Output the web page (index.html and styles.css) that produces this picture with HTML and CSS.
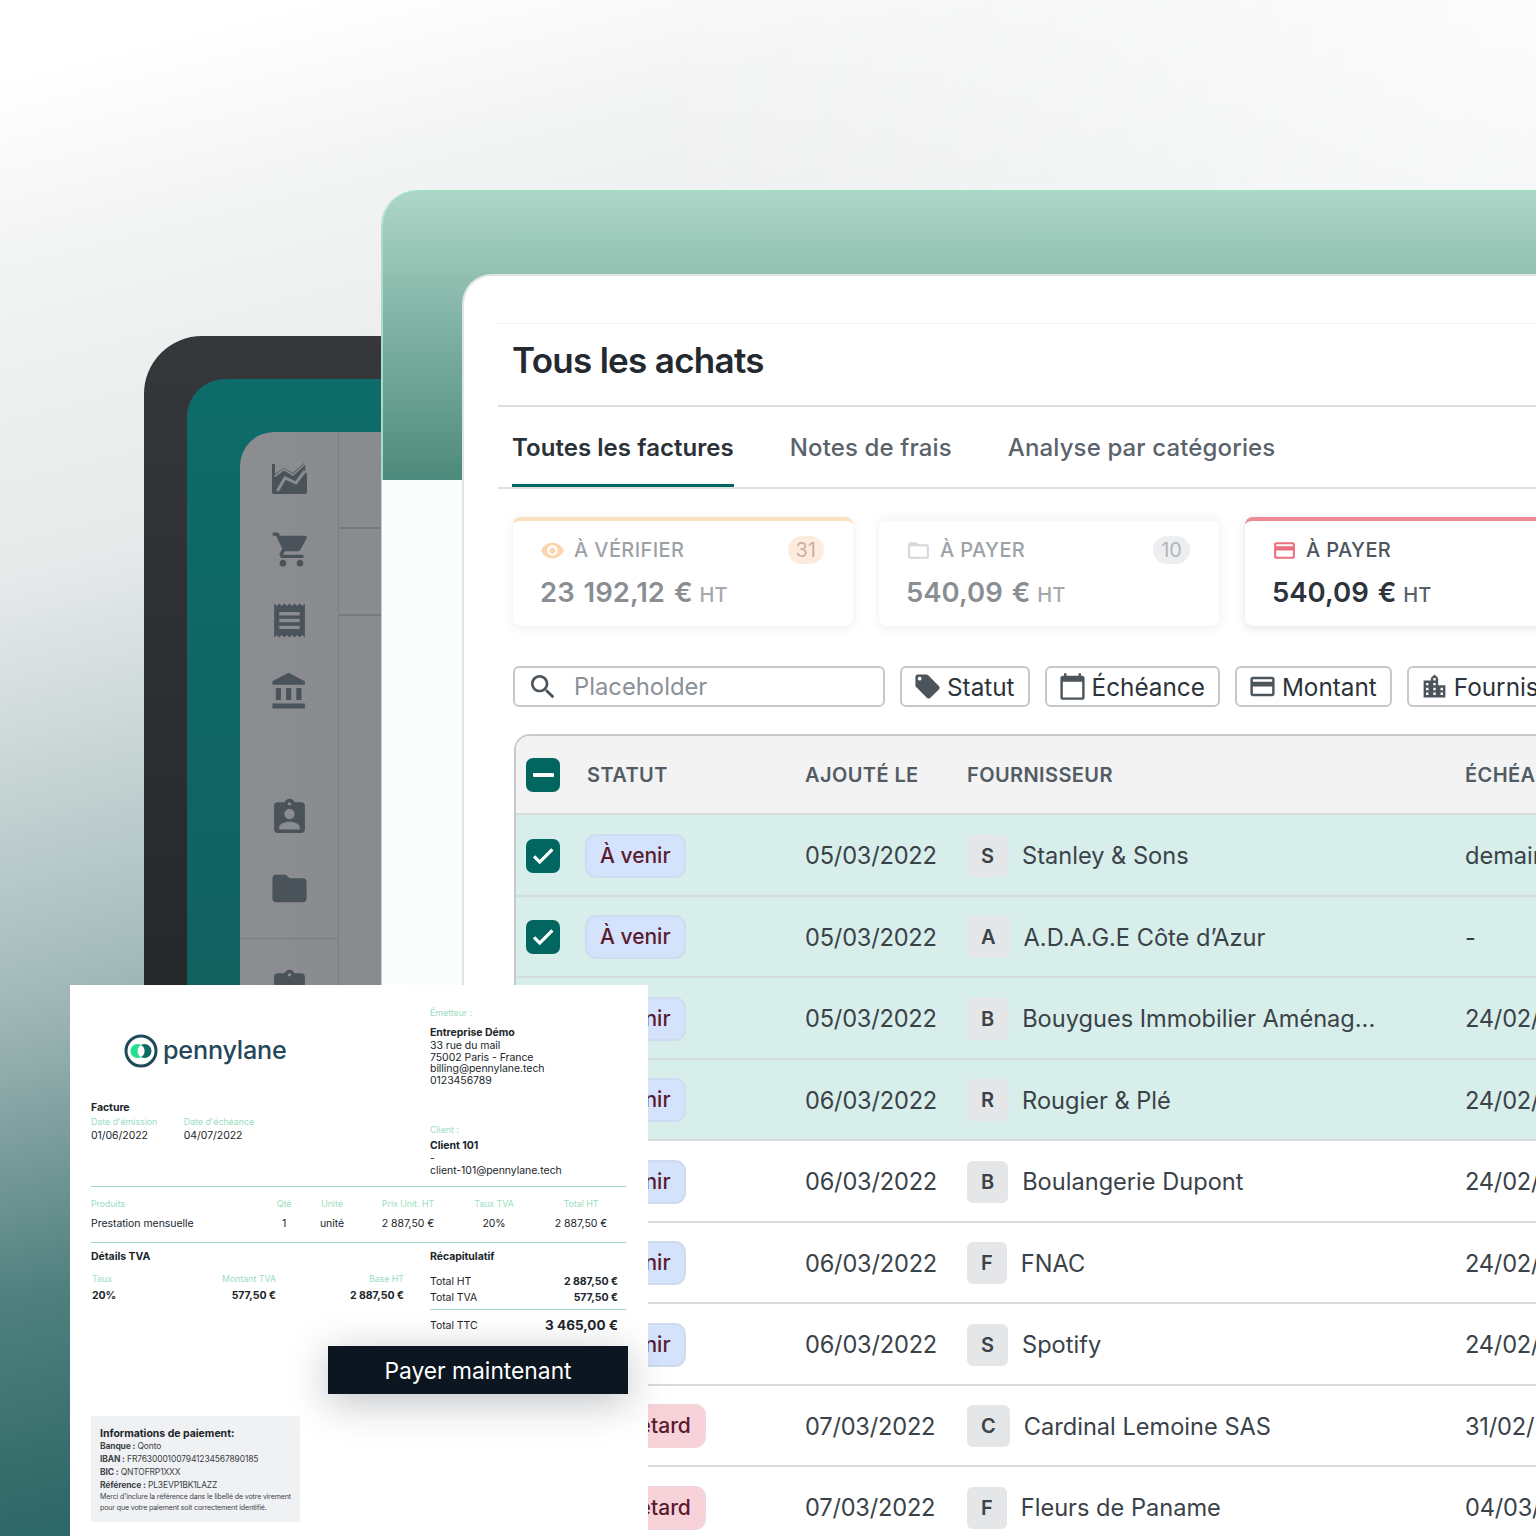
FILE: index.html
```html
<!DOCTYPE html>
<html lang="fr">
<head>
    <meta charset="UTF-8">
    <meta name="viewport" content="width=device-width, initial-scale=1">
    <title>Tous les achats</title>
    <link rel="stylesheet" href="styles.css">
</head>
<body>
<svg class="iconDefs" aria-hidden="true">
    <symbol id="iconCheck" viewBox="0 0 24 24"><path d="M9 16.17L4.83 12l-1.42 1.41L9 19 21 7l-1.41-1.41z"/></symbol>
    <symbol id="iconClipboard" viewBox="0 0 24 24"><path d="M19 3h-4.18C14.4 1.84 13.3 1 12 1c-1.3 0-2.4.84-2.82 2H5c-1.1 0-2 .9-2 2v14c0 1.1.9 2 2 2h14c1.1 0 2-.9 2-2V5c0-1.1-.9-2-2-2zm-7 0c.55 0 1 .45 1 1s-.45 1-1 1-1-.45-1-1 .45-1 1-1z"/></symbol>
    <symbol id="iconCard" viewBox="0 0 24 24"><path d="M20 4H4c-1.11 0-1.99.89-1.99 2L2 18c0 1.11.89 2 2 2h16c1.11 0 2-.89 2-2V6c0-1.11-.89-2-2-2zm0 14H4v-6h16v6zm0-10H4V6h16v2z"/></symbol>
</svg>

<div class="stage">
    <div class="darkWindow">
        <div class="tealWindow">
            <div class="grayPanel">
                <nav class="sideNav">
                    <div class="navIcon">
                        <svg class="chartIcon" viewBox="0 0 35 31">
                            <path class="chartFill" d="M0 1l3 0v10l9-6 9 5 11-10 1.5 2L33 9l2 2v18a2 2 0 0 1-2 2H2a2 2 0 0 1-2-2z"/>
                            <path class="chartGap" d="M6 27l7-12 11 5 8-11" />
                            <path class="chartGap thin" d="M3 13l9-6.5 9 5.5 12-11" />
                        </svg>
                    </div>
                    <div class="navIcon navCart"><svg viewBox="0 0 24 24"><path d="M7 18c-1.1 0-1.99.9-1.99 2S5.9 22 7 22s2-.9 2-2-.9-2-2-2zM1 2v2h2l3.6 7.59-1.35 2.45c-.16.28-.25.61-.25.96 0 1.1.9 2 2 2h12v-2H7.42c-.14 0-.25-.11-.25-.25l.03-.12.9-1.63h7.45c.75 0 1.41-.41 1.75-1.03l3.58-6.49c.08-.14.12-.31.12-.48 0-.55-.45-1-1-1H5.21l-.94-2H1zm16 16c-1.1 0-1.99.9-1.99 2s.89 2 1.99 2 2-.9 2-2-.9-2-2-2z"/></svg></div>
                    <div class="navIcon"><svg viewBox="0 0 24 24"><path d="M18 17H6v-2h12v2zm0-4H6v-2h12v2zm0-4H6V7h12v2zM3 22l1.5-1.5L6 22l1.5-1.5L9 22l1.5-1.5L12 22l1.5-1.5L15 22l1.5-1.5L18 22l1.5-1.5L21 22V2l-1.5 1.5L18 2l-1.5 1.5L15 2l-1.5 1.5L12 2l-1.5 1.5L9 2 7.5 3.5 6 2 4.5 3.5 3 2v20z"/></svg></div>
                    <div class="navIcon"><svg viewBox="0 0 24 24"><path d="M4 10v7h3v-7H4zm6 0v7h3v-7h-3zM2 22h19v-3H2v3zm14-12v7h3v-7h-3zm-4.5-9L2 6v2h19V6l-9.5-5z"/></svg></div>
                    <div class="navIcon navGroupStart"><svg viewBox="0 0 24 24"><path d="M19 3h-4.18C14.4 1.84 13.3 1 12 1c-1.3 0-2.4.84-2.82 2H5c-1.1 0-2 .9-2 2v14c0 1.1.9 2 2 2h14c1.1 0 2-.9 2-2V5c0-1.1-.9-2-2-2zm-7 0c.55 0 1 .45 1 1s-.45 1-1 1-1-.45-1-1 .45-1 1-1zm0 4c1.66 0 3 1.34 3 3s-1.34 3-3 3-3-1.34-3-3 1.34-3 3-3zm6 12H6v-1.4c0-2 4-3.1 6-3.1s6 1.1 6 3.1V19z"/></svg></div>
                    <div class="navIcon"><svg viewBox="0 0 24 24"><path d="M10 4H4c-1.1 0-1.99.9-1.99 2L2 18c0 1.1.9 2 2 2h16c1.1 0 2-.9 2-2V8c0-1.1-.9-2-2-2h-8l-2-2z"/></svg></div>
                    <div class="navLastGroup"><div class="navIcon"><svg><use href="#iconClipboard"/></svg></div></div>
                </nav>
                <div class="panelBody">
                    <div class="panelRowTop"></div>
                    <div class="panelRow"></div>
                </div>
            </div>
        </div>
    </div>

    <div class="greenFrame">
        <div class="mainCard">
            <div class="cardInner">
                <div class="topLine"></div>
                <h1 class="pageTitle">Tous les achats</h1>
                <div class="tabs">
                    <span class="tab tabActive">Toutes les factures</span>
                    <span class="tab">Notes de frais</span>
                    <span class="tab">Analyse par catégories</span>
                </div>

                <div class="summaryRow">
                    <div class="summaryCard cardOrange dim">
                        <div class="summaryHead">
                            <svg class="summaryIcon" viewBox="0 0 24 24"><path d="M12 4.5C7 4.5 2.73 7.61 1 12c1.73 4.39 6 7.5 11 7.5s9.27-3.11 11-7.5c-1.73-4.39-6-7.5-11-7.5zM12 17c-2.76 0-5-2.24-5-5s2.24-5 5-5 5 2.24 5 5-2.24 5-5 5zm0-8c-1.66 0-3 1.34-3 3s1.34 3 3 3 3-1.34 3-3-1.34-3-3-3z"/></svg>
                            <span class="summaryLabel">À VÉRIFIER</span>
                            <span class="countBadge">31</span>
                        </div>
                        <p class="summaryAmount">23 192,12 € <small>HT</small></p>
                    </div>
                    <div class="summaryCard cardGray dim">
                        <div class="summaryHead">
                            <svg class="summaryIcon" viewBox="0 0 24 24"><path d="M20 6h-8l-2-2H4c-1.1 0-1.99.9-1.99 2L2 18c0 1.1.9 2 2 2h16c1.1 0 2-.9 2-2V8c0-1.1-.9-2-2-2zm0 12H4V8h16v10z"/></svg>
                            <span class="summaryLabel">À PAYER</span>
                            <span class="countBadge">10</span>
                        </div>
                        <p class="summaryAmount">540,09 € <small>HT</small></p>
                    </div>
                    <div class="summaryCard cardRed">
                        <div class="summaryHead">
                            <svg class="summaryIcon"><use href="#iconCard"/></svg>
                            <span class="summaryLabel">À PAYER</span>
                            <span class="countBadge">10</span>
                        </div>
                        <p class="summaryAmount">540,09 € <small>HT</small></p>
                    </div>
                </div>

                <div class="filterRow">
                    <div class="searchBox">
                        <svg class="filterIcon" viewBox="0 0 24 24"><path d="M15.5 14h-.79l-.28-.27C15.41 12.59 16 11.11 16 9.5 16 5.91 13.09 3 9.5 3S3 5.91 3 9.5 5.91 16 9.5 16c1.61 0 3.09-.59 4.23-1.57l.27.28v.79l5 4.99L20.49 19l-4.99-5zm-6 0C7.01 14 5 11.99 5 9.5S7.01 5 9.5 5 14 7.01 14 9.5 11.99 14 9.5 14z"/></svg>
                        <span>Placeholder</span>
                    </div>
                    <div class="filterButton">
                        <svg class="filterIcon" viewBox="0 0 24 24"><path d="M21.41 11.58l-9-9C12.05 2.22 11.55 2 11 2H4c-1.1 0-2 .9-2 2v7c0 .55.22 1.05.59 1.42l9 9c.36.36.86.58 1.41.58.55 0 1.05-.22 1.41-.59l7-7c.37-.36.59-.86.59-1.41 0-.55-.23-1.06-.59-1.42zM5.5 7C4.67 7 4 6.33 4 5.5S4.67 4 5.5 4 7 4.67 7 5.5 6.33 7 5.5 7z"/></svg>
                        Statut
                    </div>
                    <div class="filterButton">
                        <svg class="filterIcon" viewBox="0 0 24 24"><path d="M20 3h-1V1h-2v2H7V1H5v2H4c-1.1 0-2 .9-2 2v16c0 1.1.9 2 2 2h16c1.1 0 2-.9 2-2V5c0-1.1-.9-2-2-2zm0 18H4V8h16v13z"/></svg>
                        Échéance
                    </div>
                    <div class="filterButton">
                        <svg class="filterIcon"><use href="#iconCard"/></svg>
                        Montant
                    </div>
                    <div class="filterButton">
                        <svg class="filterIcon" viewBox="0 0 24 24"><path d="M15 11V5l-3-3-3 3v2H3v14h18V11h-6zm-8 8H5v-2h2v2zm0-4H5v-2h2v2zm0-4H5V9h2v2zm6 8h-2v-2h2v2zm0-4h-2v-2h2v2zm0-4h-2V9h2v2zm0-4h-2V5h2v2zm6 12h-2v-2h2v2zm0-4h-2v-2h2v2z"/></svg>
                        Fournisseur
                    </div>
                </div>

                <div class="dataTable">
                    <div class="tableRow tableHead">
                        <span class="checkBox"><span class="minusMark"></span></span>
                        <span>Statut</span>
                        <span>Ajouté le</span>
                        <span>Fournisseur</span>
                        <span>Échéance</span>
                    </div>
                    <div class="tableRow rowChecked">
                        <span class="checkBox"><svg><use href="#iconCheck"/></svg></span>
                        <span><span class="statusChip chipBlue">À venir</span></span>
                        <span class="cellDate">05/03/2022</span>
                        <span class="supplier"><span class="letterTile">S</span>Stanley &amp; Sons</span>
                        <span>demain</span>
                    </div>
                    <div class="tableRow rowChecked">
                        <span class="checkBox"><svg><use href="#iconCheck"/></svg></span>
                        <span><span class="statusChip chipBlue">À venir</span></span>
                        <span class="cellDate">05/03/2022</span>
                        <span class="supplier"><span class="letterTile">A</span>A.D.A.G.E Côte d’Azur</span>
                        <span>-</span>
                    </div>
                    <div class="tableRow rowChecked">
                        <span class="checkBox"><svg><use href="#iconCheck"/></svg></span>
                        <span><span class="statusChip chipBlue">À venir</span></span>
                        <span class="cellDate">05/03/2022</span>
                        <span class="supplier"><span class="letterTile">B</span>Bouygues Immobilier Aménag...</span>
                        <span class="cellDate">24/02/2022</span>
                    </div>
                    <div class="tableRow rowChecked">
                        <span class="checkBox"><svg><use href="#iconCheck"/></svg></span>
                        <span><span class="statusChip chipBlue">À venir</span></span>
                        <span class="cellDate">06/03/2022</span>
                        <span class="supplier"><span class="letterTile">R</span>Rougier &amp; Plé</span>
                        <span class="cellDate">24/02/2022</span>
                    </div>
                    <div class="tableRow">
                        <span class="checkBox boxEmpty"></span>
                        <span><span class="statusChip chipBlue">À venir</span></span>
                        <span class="cellDate">06/03/2022</span>
                        <span class="supplier"><span class="letterTile">B</span>Boulangerie Dupont</span>
                        <span class="cellDate">24/02/2022</span>
                    </div>
                    <div class="tableRow">
                        <span class="checkBox boxEmpty"></span>
                        <span><span class="statusChip chipBlue">À venir</span></span>
                        <span class="cellDate">06/03/2022</span>
                        <span class="supplier"><span class="letterTile">F</span>FNAC</span>
                        <span class="cellDate">24/02/2022</span>
                    </div>
                    <div class="tableRow">
                        <span class="checkBox boxEmpty"></span>
                        <span><span class="statusChip chipBlue">À venir</span></span>
                        <span class="cellDate">06/03/2022</span>
                        <span class="supplier"><span class="letterTile">S</span>Spotify</span>
                        <span class="cellDate">24/02/2022</span>
                    </div>
                    <div class="tableRow">
                        <span class="checkBox boxEmpty"></span>
                        <span><span class="statusChip chipRed">En retard</span></span>
                        <span class="cellDate">07/03/2022</span>
                        <span class="supplier"><span class="letterTile">C</span>Cardinal Lemoine SAS</span>
                        <span class="cellDate">31/02/2022</span>
                    </div>
                    <div class="tableRow">
                        <span class="checkBox boxEmpty"></span>
                        <span><span class="statusChip chipRed">En retard</span></span>
                        <span class="cellDate">07/03/2022</span>
                        <span class="supplier"><span class="letterTile">F</span>Fleurs de Paname</span>
                        <span class="cellDate">04/03/2022</span>
                    </div>
                </div>
            </div>
        </div>
    </div>

    <div class="invoice">
        <div class="invoiceHead">
            <div>
                <div class="invoiceLogo">
                    <svg viewBox="0 0 34 34">
                        <circle cx="17" cy="17" r="15" fill="none" stroke="#1f4a5a" stroke-width="3"/>
                        <circle cx="13.5" cy="17" r="7" fill="#1fe08b"/>
                        <circle cx="20.5" cy="17" r="7" fill="#0d6b65"/>
                        <path d="M17 10.9A7 7 0 0 1 17 23.1A7 7 0 0 1 17 10.9Z" fill="#fff"/>
                    </svg>
                    <span>pennylane</span>
                </div>
                <p class="factureTitle">Facture</p>
                <div class="factureDates">
                    <div>
                        <p class="greenLabel">Date d'émission</p>
                        <p class="dateValue">01/06/2022</p>
                    </div>
                    <div>
                        <p class="greenLabel">Date d'échéance</p>
                        <p class="dateValue">04/07/2022</p>
                    </div>
                </div>
            </div>
            <div class="invoiceParties">
                <p class="greenLabel">Émetteur :</p>
                <p class="partyName">Entreprise Démo</p>
                <p class="partyLines">33 rue du mail<br>75002 Paris - France<br>billing@pennylane.tech<br>0123456789</p>
                <p class="greenLabel clientLabel">Client :</p>
                <p class="partyName clientName">Client 101</p>
                <p class="partyPlain">-</p>
                <p class="partyPlain">client-101@pennylane.tech</p>
            </div>
        </div>

        <div class="invoiceLines">
            <div class="linesGrid greenLabel">
                <span class="cellLeft">Produits</span>
                <span>Qté</span>
                <span>Unité</span>
                <span>Prix Unit. HT</span>
                <span>Taux TVA</span>
                <span class="cellLast">Total HT</span>
            </div>
            <div class="linesGrid linesValues">
                <span class="cellLeft">Prestation mensuelle</span>
                <span>1</span>
                <span>unité</span>
                <span>2 887,50 €</span>
                <span>20%</span>
                <span class="cellLast">2 887,50 €</span>
            </div>
        </div>

        <div class="invoiceTotals">
            <div>
                <p class="totalsTitle">Détails TVA</p>
                <div class="vatGrid greenLabel">
                    <span class="cellLeft">Taux</span>
                    <span>Montant TVA</span>
                    <span>Base HT</span>
                </div>
                <div class="vatGrid vatValues">
                    <span class="cellLeft">20%</span>
                    <span>577,50 €</span>
                    <span>2 887,50 €</span>
                </div>
            </div>
            <div>
                <p class="totalsTitle">Récapitulatif</p>
                <div class="recapRows">
                    <div class="recapRow"><span>Total HT</span><b>2 887,50 €</b></div>
                    <div class="recapRow"><span>Total TVA</span><b>577,50 €</b></div>
                </div>
                <div class="recapRow recapTotal"><span>Total TTC</span><b>3 465,00 €</b></div>
            </div>
        </div>

        <div class="paymentBox">
            <p class="paymentTitle">Informations de paiement:</p>
            <p><b>Banque :</b> Qonto</p>
            <p><b>IBAN :</b> FR7630001007941234567890185</p>
            <p><b>BIC :</b> QNTOFRP1XXX</p>
            <p><b>Référence :</b> PL3EVP1BK1LAZZ</p>
            <p class="paymentNote">Merci d'inclure la référence dans le libellé de votre virement<br>pour que votre paiement soit correctement identifié.</p>
        </div>

        <button class="payButton">Payer maintenant</button>
    </div>
</div>
</body>
</html>
```

FILE: styles.css
```css
:root {
    --teal: #00665f;
    --ink: #2c333a;
    --invoiceGreen: #9bddc1;
}

html, body {
    margin: 0;
    padding: 0;
    overflow: hidden;
}

body {
    font-family: Inter, "Liberation Sans", sans-serif;
    color: var(--ink);
}

p, h1 {
    margin: 0;
}

.iconDefs {
    display: none;
}

.stage {
    position: relative;
    width: 1536px;
    height: 1536px;
    overflow: hidden;
    background:
        radial-gradient(circle at 100% 0, rgba(255, 255, 255, 0.8), transparent 900px),
        linear-gradient(166deg, #ffffff 4%, #f3f4f4 13%, #e7eaea 30%, #d0dada 38%, #b0c4c4 48%, #a0b6b6 53%, #4f807e 68%, #2d6766 80%);
}

/* back window */
.darkWindow {
    position: absolute;
    left: 144px;
    top: 336px;
    width: 520px;
    height: 800px;
    box-sizing: border-box;
    padding: 43px 0 0 43px;
    background: linear-gradient(#35373b, #222426);
    border-radius: 58px 0 0 0;
}

.tealWindow {
    height: 100%;
    box-sizing: border-box;
    padding: 53px 0 0 53px;
    background: linear-gradient(#0d6c69, #125e5d);
    border-radius: 38px 0 0 0;
}

.grayPanel {
    display: flex;
    height: 100%;
    background: linear-gradient(90deg, #8b8d91, #85888b);
    border-radius: 34px 0 0 0;
    overflow: hidden;
}

.sideNav {
    width: 99px;
    flex-shrink: 0;
    box-sizing: border-box;
    padding: 11px 0 0 1px;
    border-right: 1px solid #797c80;
}

.navIcon {
    display: flex;
    align-items: center;
    justify-content: center;
    height: 71px;
}

.navCart {
    padding-left: 3px;
}

.navIcon svg {
    width: 41px;
    height: 41px;
    fill: #4a525a;
}

.navIcon .chartIcon {
    width: 35px;
    height: 31px;
}

.chartFill {
    fill: #4a525a;
}

.chartGap {
    fill: none;
    stroke: #8a8c90;
    stroke-width: 3;
    stroke-linecap: round;
}

.chartGap.thin {
    stroke-width: 1.6;
}

.navGroupStart {
    margin-top: 55px;
}

.navLastGroup {
    margin: 14px 0 0 -1px;
    padding: 14px 0 0 1px;
    border-top: 1px solid #797c80;
}

.panelBody {
    flex: 1;
}

.panelRowTop {
    height: 95px;
    border-bottom: 2px solid #76797d;
}

.panelRow {
    height: 85px;
    border-bottom: 2px solid #76797d;
}

/* front window */
.greenFrame {
    position: absolute;
    left: 382px;
    top: 190px;
    width: 1300px;
    height: 1500px;
    background: linear-gradient(90deg, #fbfcfc, #f3f5f5);
    box-shadow: -1px 0 0 #c8cdd0;
    border-radius: 36px 0 0 0;
}

.greenFrame::before {
    content: "";
    position: absolute;
    left: 0;
    top: 0;
    right: 0;
    height: 290px;
    box-sizing: border-box;
    background: linear-gradient(#add6c7, #4d8a7b);
    border: solid #93e8c0;
    border-width: 1.5px 0 0 1.5px;
    border-radius: 36px 0 0 0;
}

.mainCard {
    position: absolute;
    left: 80px;
    top: 84px;
    right: 0;
    bottom: 0;
    background: #ffffff;
    border: 2px solid #e1e4e7;
    border-radius: 30px 0 0 0;
}

.cardInner {
    margin-left: 34px;
}

.topLine {
    height: 47px;
    border-bottom: 1px solid #f1f2f2;
}

.pageTitle {
    height: 83px;
    box-sizing: border-box;
    padding-left: 14px;
    font-size: 35px;
    font-weight: 600;
    letter-spacing: -0.7px;
    line-height: 73px;
    color: #23292f;
    border-bottom: 2px solid #dcdfe1;
}

.tabs {
    display: flex;
    gap: 56px;
    height: 82px;
    box-sizing: border-box;
    padding-left: 14px;
    border-bottom: 2px solid #dee1e3;
}

.tab {
    height: 80px;
    box-sizing: border-box;
    font-size: 24px;
    font-weight: 500;
    letter-spacing: 0.13px;
    line-height: 81px;
    color: #5a636b;
}

.tabActive {
    font-weight: 600;
    letter-spacing: 0.05px;
    color: #2a3238;
    border-bottom: 3px solid var(--teal);
    margin-bottom: -1px;
}

/* summary cards */
.summaryRow {
    display: flex;
    gap: 26px;
    margin: 28px 0 0 15px;
}

.summaryCard {
    width: 340px;
    flex-shrink: 0;
    height: 109px;
    box-sizing: border-box;
    padding: 14px 29px 0 27px;
    background: #ffffff;
    border-top: 4px solid #f2f3f3;
    border-radius: 8px;
    box-shadow: 0 2px 10px rgba(40, 50, 60, 0.14);
}

.summaryCard.cardRed {
    width: 400px;
    border-top-color: #ef8a95;
}

.cardOrange {
    border-top-color: #fcc78f;
}

.dim {
    opacity: 0.55;
}

.summaryHead {
    display: flex;
    align-items: center;
    height: 30px;
}

.summaryIcon {
    width: 25px;
    height: 25px;
    margin-right: 9px;
}

.cardOrange .summaryIcon {
    fill: #fbb36e;
}

.cardGray .summaryIcon {
    fill: #b4b8bc;
}

.cardRed .summaryIcon {
    fill: #ec6f7f;
}

.summaryLabel {
    font-size: 20px;
    font-weight: 500;
    letter-spacing: 0.4px;
    color: #4c555d;
}

.countBadge {
    margin-left: auto;
    height: 28px;
    padding: 0 8px;
    border-radius: 14px;
    font-size: 20px;
    line-height: 28px;
    color: #a46a5c;
    background: #fddcc3;
}

.cardGray .countBadge {
    color: #747a80;
    background: #dfe1e3;
}

.cardRed .countBadge {
    color: #8d2d3c;
    background: #f8cfd5;
}

.summaryAmount {
    margin-top: 9px;
    font-size: 27.5px;
    font-weight: 600;
    word-spacing: 2px;
    line-height: 36px;
    color: var(--ink);
}

.summaryAmount small {
    margin-left: -2px;
    font-size: 20px;
    font-weight: 500;
    color: #596269;
}

/* filters */
.filterRow {
    display: flex;
    gap: 15px;
    margin: 40px 0 0 15px;
}

.searchBox, .filterButton {
    display: flex;
    align-items: center;
    flex-shrink: 0;
    height: 41px;
    box-sizing: border-box;
    background: #ffffff;
    border: 2px solid #c4c9cd;
    border-radius: 6px;
    font-size: 24.3px;
    color: var(--ink);
}

.searchBox {
    width: 372px;
    padding-left: 12px;
    font-size: 23.8px;
    color: #8a9197;
}

.searchBox .filterIcon {
    width: 32px;
    height: 32px;
    margin-right: 15px;
}

.filterButton {
    padding: 0 13px 0 11px;
}

.filterIcon {
    width: 29px;
    height: 29px;
    margin-right: 5px;
    fill: #4c545c;
}

/* table */
.dataTable {
    width: 1200px;
    margin: 27px 0 0 16px;
    border: solid #c6cacd;
    border-width: 2px 0 0 2px;
    border-radius: 16px 0 0 0;
    overflow: hidden;
    font-size: 23.6px;
    color: #3a4249;
}

.tableRow {
    display: grid;
    grid-template-columns: 71px 218px 162px 498px 1fr;
    align-items: center;
    height: 81.5px;
    box-sizing: border-box;
    padding-top: 2px;
    background: #ffffff;
    border-bottom: 2px solid #d6dbde;
}

.tableHead {
    height: 79px;
    padding-top: 0;
    background: #f3f3f3;
    font-size: 20px;
    font-weight: 600;
    letter-spacing: 0.4px;
    text-transform: uppercase;
    color: #525c64;
}

.rowChecked {
    background: #d8eeea;
}

.cellDate {
    letter-spacing: -0.2px;
}

.checkBox {
    display: flex;
    align-items: center;
    justify-content: center;
    width: 34px;
    height: 34px;
    margin-left: 10px;
    background: var(--teal);
    border-radius: 7px;
}

.checkBox svg {
    width: 26px;
    height: 26px;
    fill: #ffffff;
    stroke: #ffffff;
    stroke-width: 1;
}

.boxEmpty {
    background: #ffffff;
    border: 2px solid #c6cacd;
    box-sizing: border-box;
}

.minusMark {
    width: 21px;
    height: 4px;
    background: #ffffff;
    border-radius: 1px;
}

.statusChip {
    display: inline-block;
    height: 44px;
    margin-left: -2px;
    padding: 0 13px;
    box-sizing: border-box;
    border: 2px solid;
    border-radius: 11px;
    font-size: 21px;
    font-weight: 500;
    line-height: 39px;
    color: #5a1a2e;
}

.chipBlue {
    background: #d4e2fb;
    border-color: #cfdcef;
}

.chipRed {
    background: #f7d3d9;
    border-color: #f3d5da;
}

.supplier {
    display: flex;
    align-items: center;
}

.letterTile {
    height: 42px;
    margin-right: 14px;
    padding: 0 14px;
    background: #e5e6e8;
    border-radius: 6px;
    font-size: 20px;
    font-weight: 600;
    line-height: 42px;
}

/* invoice on top */
.invoice {
    position: absolute;
    left: 70px;
    top: 985px;
    width: 578px;
    height: 551px;
    box-sizing: border-box;
    padding: 0 22px 0 21px;
    background: #ffffff;
    font-size: 10.5px;
    letter-spacing: -0.05px;
    color: #20262b;
}

.invoiceHead {
    display: grid;
    grid-template-columns: 339px 1fr;
    height: 202px;
    box-sizing: border-box;
    border-bottom: 1.5px solid var(--invoiceGreen);
}

.invoiceLogo {
    display: flex;
    align-items: center;
    gap: 5px;
    height: 34px;
    margin: 48px 0 0 33px;
    font-size: 25.2px;
    font-weight: 500;
    letter-spacing: -0.2px;
    color: #26475a;
}

.invoiceLogo svg {
    width: 34px;
    height: 34px;
    margin-top: 2px;
}

.factureTitle {
    margin-top: 34px;
    font-weight: 700;
    line-height: 14px;
}

.factureDates {
    display: flex;
    gap: 26.5px;
    margin-top: 1px;
}

.greenLabel {
    font-size: 8.9px;
    line-height: 12px;
    color: var(--invoiceGreen);
}

.dateValue {
    margin-top: 1px;
    line-height: 14px;
}

.invoiceParties {
    padding-top: 22px;
}

.partyName {
    margin-top: 7px;
    font-weight: 700;
    line-height: 14px;
}

.partyLines {
    line-height: 11.7px;
}

.clientLabel {
    margin-top: 37px;
}

.clientName {
    margin-top: 3px;
}

.partyPlain {
    line-height: 12.5px;
}

.invoiceLines {
    height: 56px;
    box-sizing: border-box;
    padding-top: 11px;
    border-bottom: 1.5px solid var(--invoiceGreen);
}

.linesGrid {
    display: grid;
    grid-template-columns: 170px 46px 50px 102px 70px 97px;
    text-align: center;
}

.linesValues {
    margin-top: 7px;
    line-height: 14px;
}

.cellLeft {
    text-align: left;
}

.cellLast {
    padding-left: 7px;
}

.invoiceTotals {
    display: grid;
    grid-template-columns: 339px 1fr;
    padding-top: 7px;
}

.totalsTitle {
    font-weight: 700;
    line-height: 14px;
}

.vatGrid {
    display: grid;
    grid-template-columns: 60px 124px 128px;
    margin-top: 9px;
    padding-left: 1px;
    text-align: right;
}

.vatValues {
    margin-top: 4px;
    font-weight: 700;
    line-height: 14px;
}

.recapRows {
    margin-top: 9px;
    padding-bottom: 4px;
    border-bottom: 1.5px solid var(--invoiceGreen);
}

.recapRow {
    display: flex;
    justify-content: space-between;
    align-items: center;
    height: 16px;
    padding-right: 8px;
}

.recapTotal {
    height: 18px;
    margin-top: 6px;
}

.recapTotal b {
    font-size: 13.5px;
    letter-spacing: 0;
}

.paymentBox {
    width: 209px;
    height: 106px;
    box-sizing: border-box;
    margin-top: 82px;
    padding: 11px 0 0 9px;
    background: #f0f1f3;
    font-size: 8.5px;
    letter-spacing: -0.15px;
    line-height: 13px;
    color: #3c4349;
}

.paymentTitle {
    font-size: 10.5px;
    font-weight: 700;
    letter-spacing: -0.02px;
    color: #20262b;
}

.paymentNote {
    font-size: 7.1px;
    line-height: 10.5px;
}

.payButton {
    position: absolute;
    left: 258px;
    top: 361px;
    width: 300px;
    height: 48px;
    padding: 0;
    border: none;
    background: #0c1620;
    box-shadow: 0 8px 40px rgba(20, 30, 40, 0.28);
    font-family: Inter, "Liberation Sans", sans-serif;
    font-size: 22.8px;
    color: #ffffff;
}
```
